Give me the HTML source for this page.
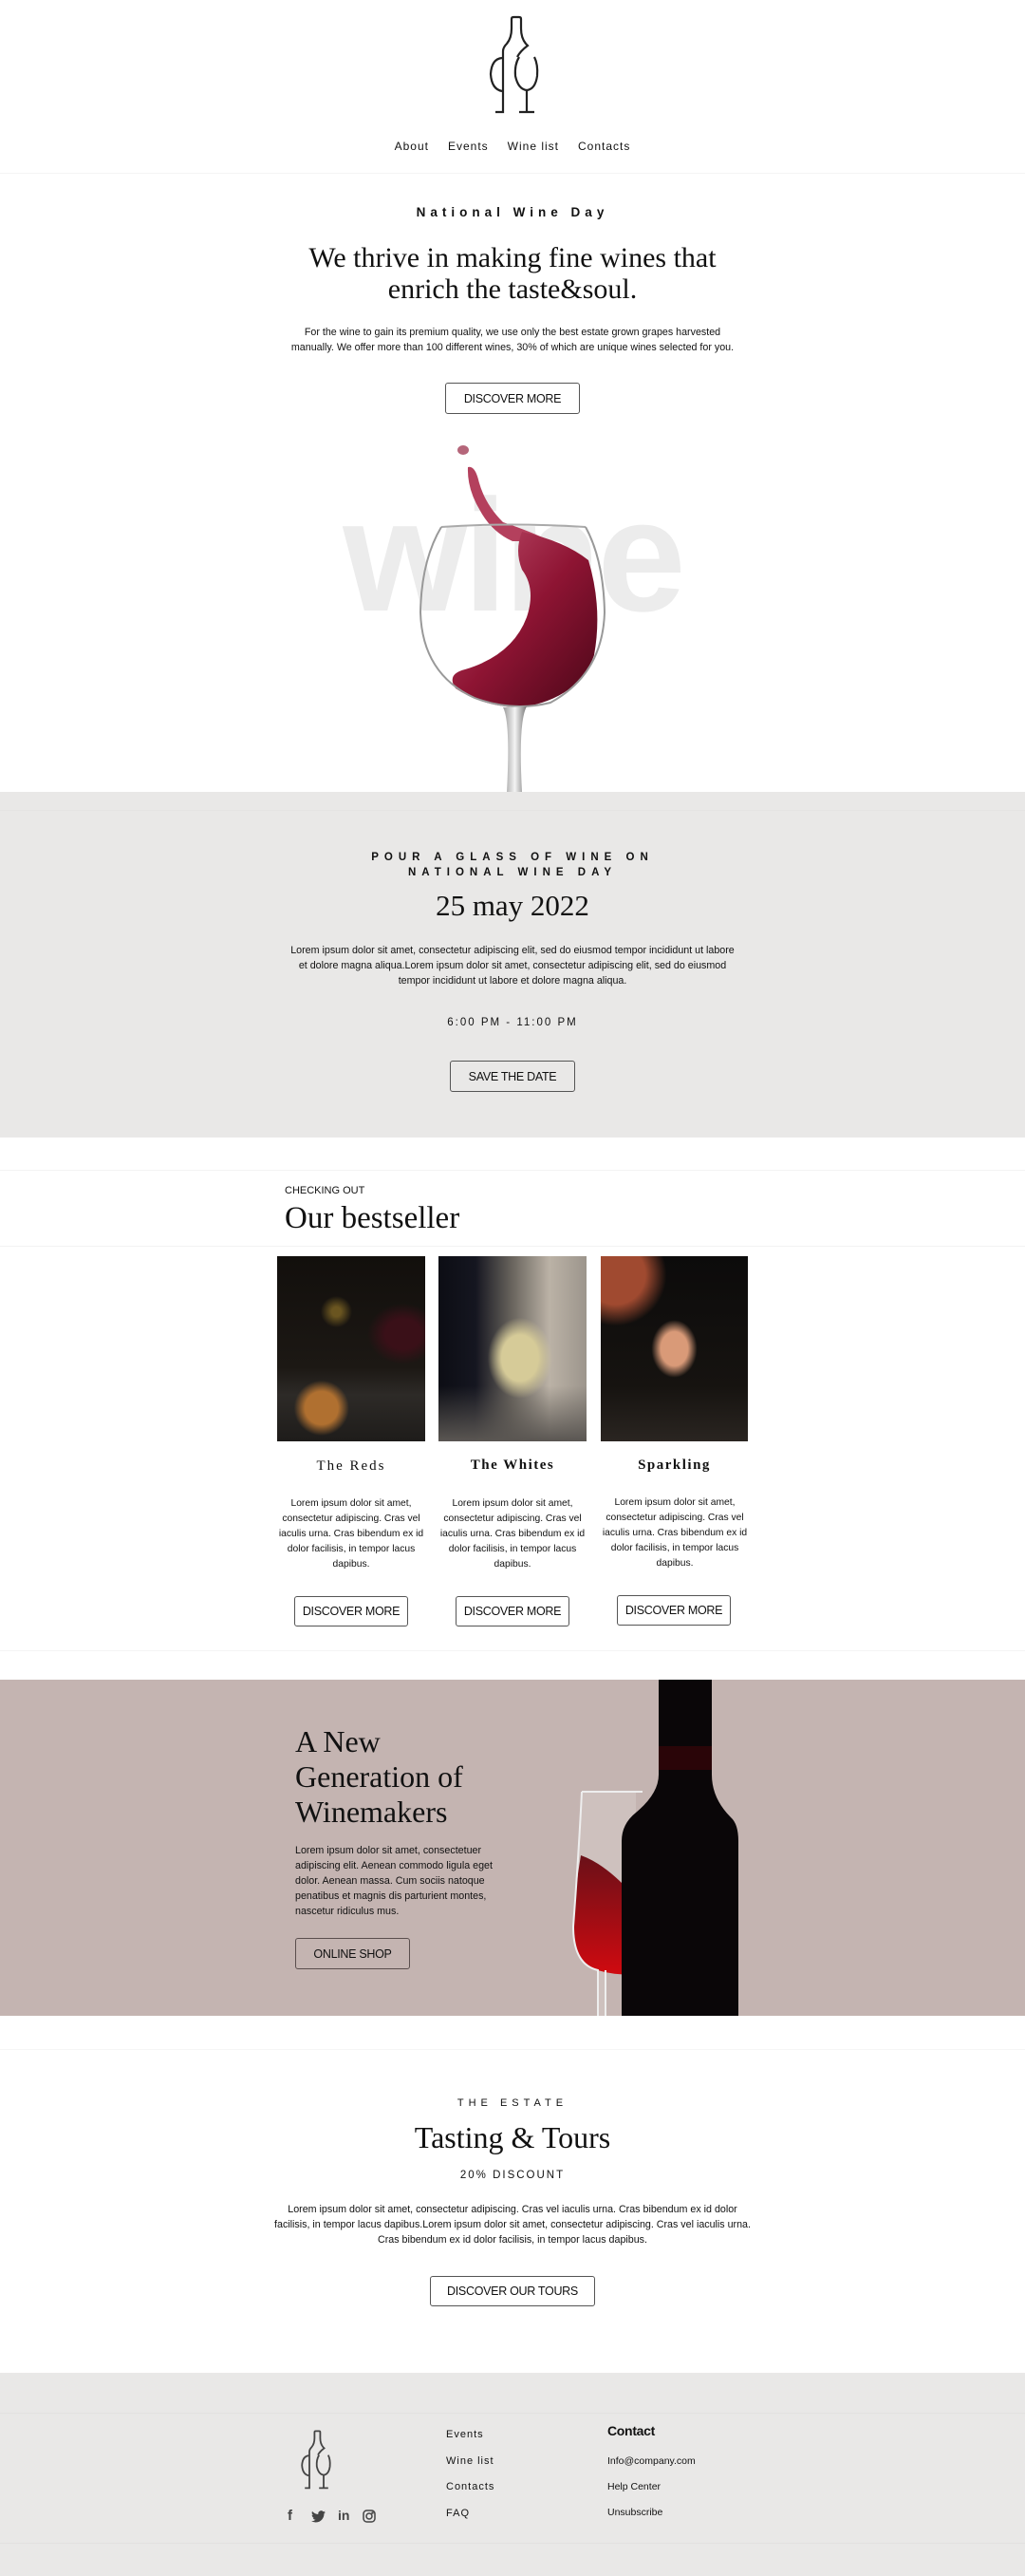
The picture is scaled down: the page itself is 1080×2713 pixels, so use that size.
<!DOCTYPE html>
<html><head><meta charset="utf-8"><style>
*{margin:0;padding:0;box-sizing:border-box}
body{width:1080px;height:2713px;background:#fff;font-family:"Liberation Sans",sans-serif;color:#111;position:relative;overflow:hidden}
.a{position:absolute}
.c{text-align:center;left:0;width:1080px}
.serif{font-family:"Liberation Serif",serif}
.btn{position:absolute;border:1.3px solid #555;border-radius:3px;font-size:12.5px;display:flex;align-items:center;justify-content:center;color:#111;letter-spacing:-0.3px}
.p{font-size:10.7px;line-height:16px}
</style></head><body>

<!-- logo -->
<svg class="a" style="left:510px;top:16px" width="60" height="106" viewBox="0 0 60 106" fill="none" stroke="#222" stroke-width="2.2">
<path d="M12 102 H20 V38 Q20 34 24 30 Q29 24 29 14 V4 Q29 2 31 2 H37 Q39 2 39 4 V14 Q39 24 44 30 L46 32 Q38 38 35 44"/>
<path d="M19 45 Q8 46 7 62 Q8 78 19 80"/>
<path d="M37 44 Q32 52 33 64 Q36 78 45 79 Q54 78 56 64 Q57 52 53 44"/>
<path d="M45 79 V102 M37 102 H53"/>
</svg>

<div class="a c" style="top:147px;font-size:12px;letter-spacing:1px">
<span style="margin:0 10px">About</span><span style="margin:0 10px">Events</span><span style="margin:0 10px">Wine list</span><span style="margin:0 10px">Contacts</span></div>
<div class="a" style="left:0;top:182px;width:1080px;height:1px;background:#f5f5f5"></div>

<div class="a c" style="top:216px;font-size:13.5px;font-weight:bold;letter-spacing:5px">National Wine Day</div>
<div class="a c serif" style="top:255px;font-size:30px;line-height:33px">We thrive in making fine wines that<br>enrich the taste&amp;soul.</div>
<div class="a c p" style="top:342px">For the wine to gain its premium quality, we use only the best estate grown grapes harvested<br>manually. We offer more than 100 different wines, 30% of which are unique wines selected for you.</div>
<div class="btn" style="left:469px;top:403px;width:142px;height:33px">DISCOVER MORE</div>

<!-- hero -->
<div class="a" style="left:340px;top:505px;width:400px;text-align:center;font-size:168px;font-weight:bold;color:#ececec;letter-spacing:-4px;line-height:160px">wine</div>
<svg class="a" style="left:430px;top:460px" width="220" height="374" viewBox="0 0 220 374">
<defs><linearGradient id="w" x1="0" y1="0" x2="1" y2="1"><stop offset="0" stop-color="#c0506e"/><stop offset=".5" stop-color="#8e1433"/><stop offset="1" stop-color="#4a0718"/></linearGradient>
<linearGradient id="s" x1="0" x2="1"><stop offset="0" stop-color="#999"/><stop offset=".5" stop-color="#f4f4f4"/><stop offset="1" stop-color="#777"/></linearGradient></defs>
<ellipse cx="58" cy="14" rx="6" ry="5" fill="#b5667a"/>
<path d="M63 32 Q70 30 74 45 Q80 70 100 90 Q130 100 150 110 L110 110 Q88 100 76 78 Q62 55 63 32Z" fill="#b4405d"/>
<path d="M120 100 Q165 110 190 130 Q205 180 196 230 Q180 275 120 285 Q80 285 50 265 Q40 250 60 245 Q110 230 125 190 Q135 160 120 140 Q112 120 120 100Z" fill="url(#w)"/>
<path d="M35 95 Q105 90 187 95" stroke="#aaa" stroke-width="2" fill="none"/>
<path d="M35 95 Q14 130 13 185 Q15 250 70 275 Q110 290 150 280 Q205 250 207 185 Q206 130 187 95" stroke="#999" stroke-width="2" fill="none"/>
<path d="M100 285 Q108 300 104 374 L120 374 Q116 300 125 284Z" fill="url(#s)"/>
</svg>

<!-- event -->
<div class="a" style="left:0;top:834px;width:1080px;height:364px;background:#e9e8e7"></div>
<div class="a" style="left:0;top:853px;width:1080px;height:1px;background:#e5e4e3"></div>
<div class="a c" style="top:895px;font-size:11.5px;font-weight:bold;letter-spacing:6px;line-height:16px">POUR A GLASS OF WINE ON<br>NATIONAL WINE DAY</div>
<div class="a c serif" style="top:936px;font-size:31px">25 may 2022</div>
<div class="a c p" style="top:993px">Lorem ipsum dolor sit amet, consectetur adipiscing elit, sed do eiusmod tempor incididunt ut labore<br>et dolore magna aliqua.Lorem ipsum dolor sit amet, consectetur adipiscing elit, sed do eiusmod<br>tempor incididunt ut labore et dolore magna aliqua.</div>
<div class="a c" style="top:1071px;font-size:11.5px;letter-spacing:2px">6:00 PM - 11:00 PM</div>
<div class="btn" style="left:474px;top:1117px;width:132px;height:33px">SAVE THE DATE</div>

<!-- bestseller -->
<div class="a" style="left:0;top:1232px;width:1080px;height:1px;background:#f3f3f3"></div>
<div class="a" style="left:300px;top:1248px;font-size:11px">CHECKING OUT</div>
<div class="a serif" style="left:300px;top:1265px;font-size:33px">Our bestseller</div>
<div class="a" style="left:0;top:1312px;width:1080px;height:1px;background:#f3f3f3"></div>

<div class="a" style="left:292px;top:1323px;width:156px;height:195px;background:radial-gradient(circle at 30% 82%,#b07030 0 9%,transparent 15%),radial-gradient(ellipse at 85% 42%,#3a1018 0 10%,transparent 20%),radial-gradient(circle at 40% 30%,#6a5520 0 3%,transparent 10%),linear-gradient(180deg,#120f0c 0%,#1c1814 60%,#2d2a27 75%,#1e1c1a 100%)"></div>
<div class="a" style="left:462px;top:1323px;width:156px;height:195px;background:radial-gradient(ellipse at 55% 55%,#d6cb98 0 16%,transparent 28%),linear-gradient(180deg,transparent 70%,#5a5652 100%),linear-gradient(90deg,#0c0d14 0%,#151620 25%,#6a655e 50%,#bbb2a6 75%,#9c958c 100%)"></div>
<div class="a" style="left:633px;top:1323px;width:155px;height:195px;background:radial-gradient(ellipse at 50% 50%,#d99a78 0 13%,transparent 22%),radial-gradient(circle at 10% 10%,#a04a30 0 14%,transparent 24%),linear-gradient(180deg,#0c0b0b,#161310 70%,#2a2521)"></div>

<div class="a serif" style="left:292px;top:1536px;width:156px;text-align:center;font-size:15px;letter-spacing:2px">The Reds</div>
<div class="a serif" style="left:462px;top:1535px;width:156px;text-align:center;font-size:15px;font-weight:bold;letter-spacing:1.5px">The Whites</div>
<div class="a serif" style="left:633px;top:1535px;width:155px;text-align:center;font-size:15px;font-weight:bold;letter-spacing:1.5px">Sparkling</div>
<div class="a p" style="left:290px;top:1576px;width:160px;text-align:center;font-size:10.3px">Lorem ipsum dolor sit amet, consectetur adipiscing. Cras vel iaculis urna. Cras bibendum ex id dolor facilisis, in tempor lacus dapibus.</div>
<div class="a p" style="left:460px;top:1576px;width:160px;text-align:center;font-size:10.3px">Lorem ipsum dolor sit amet, consectetur adipiscing. Cras vel iaculis urna. Cras bibendum ex id dolor facilisis, in tempor lacus dapibus.</div>
<div class="a p" style="left:631px;top:1575px;width:160px;text-align:center;font-size:10.3px">Lorem ipsum dolor sit amet, consectetur adipiscing. Cras vel iaculis urna. Cras bibendum ex id dolor facilisis, in tempor lacus dapibus.</div>
<div class="btn" style="left:310px;top:1681px;width:120px;height:32px">DISCOVER MORE</div>
<div class="btn" style="left:480px;top:1681px;width:120px;height:32px">DISCOVER MORE</div>
<div class="btn" style="left:650px;top:1680px;width:120px;height:32px">DISCOVER MORE</div>
<div class="a" style="left:0;top:1738px;width:1080px;height:1px;background:#f5f5f5"></div>

<!-- new generation -->
<div class="a" style="left:0;top:1769px;width:1080px;height:354px;background:#c4b4b1"></div>
<div class="a serif" style="left:311px;top:1816px;font-size:32px;line-height:37px">A New<br>Generation of<br>Winemakers</div>
<div class="a p" style="left:311px;top:1941px;width:215px">Lorem ipsum dolor sit amet, consectetuer adipiscing elit. Aenean commodo ligula eget dolor. Aenean massa. Cum sociis natoque penatibus et magnis dis parturient montes, nascetur ridiculus mus.</div>
<div class="btn" style="left:311px;top:2041px;width:121px;height:33px;border-color:#5a4e4d">ONLINE SHOP</div>
<svg class="a" style="left:600px;top:1769px" width="200" height="354" viewBox="0 0 200 354">
<defs><linearGradient id="r" x1="0" y1="0" x2="0" y2="1"><stop offset="0" stop-color="#6a1018"/><stop offset="1" stop-color="#d00a10"/></linearGradient></defs>
<path d="M13 118 Q10 180 4 260 Q4 300 30 306 L30 354 L38 354 L38 306 Q60 300 70 270 L70 118Z" fill="#d8cdcb" opacity=".5"/>
<path d="M12 185 Q40 195 70 230 L70 310 Q50 312 30 306 Q4 300 4 260 Q6 220 12 185Z" fill="url(#r)"/>
<path d="M13 118 H77 M13 118 Q10 180 4 260 Q4 300 30 306 V354 M38 354 V306" stroke="#eee" stroke-width="2" fill="none"/>
<path d="M94 0 H150 V100 Q150 125 170 145 Q178 152 178 170 V354 H55 V170 Q55 152 70 140 Q94 120 94 100Z" fill="#0a0608"/>
<rect x="94" y="70" width="56" height="25" fill="#2a0508"/>
</svg>

<!-- tasting -->
<div class="a" style="left:0;top:2158px;width:1080px;height:1px;background:#f6f6f6"></div>
<div class="a c" style="top:2209px;font-size:11px;letter-spacing:5px">THE ESTATE</div>
<div class="a c serif" style="top:2233px;font-size:32px">Tasting &amp; Tours</div>
<div class="a c" style="top:2285px;font-size:11.5px;letter-spacing:2px">20% DISCOUNT</div>
<div class="a c p" style="top:2319px">Lorem ipsum dolor sit amet, consectetur adipiscing. Cras vel iaculis urna. Cras bibendum ex id dolor<br>facilisis, in tempor lacus dapibus.Lorem ipsum dolor sit amet, consectetur adipiscing. Cras vel iaculis urna.<br>Cras bibendum ex id dolor facilisis, in tempor lacus dapibus.</div>
<div class="btn" style="left:453px;top:2397px;width:174px;height:32px">DISCOVER OUR TOURS</div>

<!-- footer -->
<div class="a" style="left:0;top:2499px;width:1080px;height:214px;background:#e9e8e7"></div>
<div class="a" style="left:0;top:2541px;width:1080px;height:1px;background:#e2e1e0"></div>
<div class="a" style="left:0;top:2678px;width:1080px;height:1px;background:#e2e1e0"></div>
<svg class="a" style="left:314px;top:2558px" width="36" height="66" viewBox="0 0 60 106" fill="none" stroke="#444" stroke-width="3">
<path d="M12 102 H20 V38 Q20 34 24 30 Q29 24 29 14 V4 Q29 2 31 2 H37 Q39 2 39 4 V14 Q39 24 44 30 L46 32 Q38 38 35 44"/>
<path d="M19 45 Q8 46 7 62 Q8 78 19 80"/>
<path d="M37 44 Q32 52 33 64 Q36 78 45 79 Q54 78 56 64 Q57 52 53 44"/>
<path d="M45 79 V102 M37 102 H53"/>
</svg>
<div class="a" style="left:303px;top:2641px;font-size:15px;font-weight:bold;color:#444">f</div>
<svg class="a" style="left:328px;top:2644px" width="15" height="13" viewBox="0 0 24 20"><path d="M24 2.4a10 10 0 0 1-2.8.8A5 5 0 0 0 23.3.4a10 10 0 0 1-3.1 1.2A4.9 4.9 0 0 0 11.8 6 14 14 0 0 1 1.7.9a4.9 4.9 0 0 0 1.5 6.6A5 5 0 0 1 1 6.9a4.9 4.9 0 0 0 3.9 4.8 5 5 0 0 1-2.2.1 4.9 4.9 0 0 0 4.6 3.4A9.9 9.9 0 0 1 0 17.3 14 14 0 0 0 7.5 19.5c9 0 14-7.5 14-14v-.6A10 10 0 0 0 24 2.4z" fill="#444"/></svg>
<div class="a" style="left:356px;top:2641px;font-size:14px;font-weight:bold;color:#444">in</div>
<svg class="a" style="left:382px;top:2643px" width="14" height="14" viewBox="0 0 14 14" fill="none" stroke="#444" stroke-width="1.5"><rect x="1" y="1" width="12" height="12" rx="3.5"/><circle cx="7" cy="7" r="3"/><circle cx="10.5" cy="3.5" r=".5" fill="#444"/></svg>
<div class="a" style="left:470px;top:2551px;font-size:11px;letter-spacing:1px;line-height:27.5px">Events<br>Wine list<br>Contacts<br>FAQ</div>
<div class="a" style="left:640px;top:2552px;font-size:14px;font-weight:bold;letter-spacing:-0.3px">Contact</div>
<div class="a" style="left:640px;top:2579px;font-size:10.5px;line-height:27px">Info@company.com<br>Help Center<br>Unsubscribe</div>

</body></html>
